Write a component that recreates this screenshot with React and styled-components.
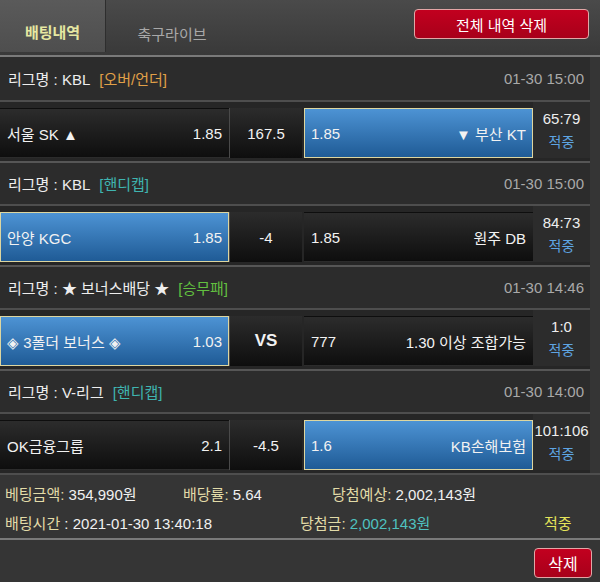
import React from 'react'
import styled, {createGlobalStyle} from 'styled-components'

const Global = createGlobalStyle`
  body{
    margin:0;
    background:#353535;
    font-family:"Liberation Sans","Noto Sans CJK KR",sans-serif;
    color:#eee;
  }
`

const bets = [
  {
    league: 'KBL', tag: '[오버/언더]', tagColor: '#e0a048', date: '01-30 15:00',
    home: '서울 SK ▲', homeOdd: '1.85', mid: '167.5', awayOdd: '1.85', away: '▼ 부산 KT',
    pick: 'away', score: '65:79',
  },
  {
    league: 'KBL', tag: '[핸디캡]', tagColor: '#3fb4b0', date: '01-30 15:00',
    home: '안양 KGC', homeOdd: '1.85', mid: '-4', awayOdd: '1.85', away: '원주 DB',
    pick: 'home', score: '84:73',
  },
  {
    league: '★ 보너스배당 ★', tag: '[승무패]', tagColor: '#62c040', date: '01-30 14:46',
    home: '◈ 3폴더 보너스 ◈', homeOdd: '1.03', mid: 'VS', awayOdd: '777', away: '1.30 이상 조합가능',
    pick: 'home', score: '1:0', bold: true,
  },
  {
    league: 'V-리그', tag: '[핸디캡]', tagColor: '#3fb4b0', date: '01-30 14:00',
    home: 'OK금융그룹', homeOdd: '2.1', mid: '-4.5', awayOdd: '1.6', away: 'KB손해보험',
    pick: 'away', score: '101:106',
  },
]

const Page = styled.div`
  width:600px;
  min-height:582px;
  background:#353535;
`

const TopBar = styled.div`
  height:55px;
  display:flex;
  align-items:stretch;
  background:linear-gradient(#4a4a4a,#393939);
  border-bottom:2px solid #7a7a7a;
`

const Tab = styled.div`
  width:${p => p.$w}px;
  display:flex;
  align-items:center;
  justify-content:center;
  padding-top:11px;
  box-sizing:border-box;
  font-size:15px;
  font-weight:${p => p.$active ? 700 : 400};
  color:${p => p.$active ? '#e6e8a2' : '#a8a8a8'};
  background:${p => p.$active ? 'linear-gradient(#5a5a5a,#4e4e4e)' : 'transparent'};
  border-right:${p => p.$active ? '1px solid #2e2e2e' : 'none'};
  margin-bottom:${p => p.$active ? '3px' : '0'};
`

const RedButton = styled.button`
  font-family:inherit;
  font-size:${p => p.$small ? 16 : 15}px;
  color:#fff;
  background:linear-gradient(#c2001f,#a8001a);
  border:1px solid #e2a6a6;
  border-radius:4px;
  width:${p => p.$w}px;
  height:30px;
  padding:0;
`

const TopButton = styled(RedButton)`
  margin:9px 11px 0 auto;
`

const List = styled.div`
  width:590px;
`

const LeagueHead = styled.div`
  height:43px;
  display:flex;
  align-items:center;
  justify-content:space-between;
  padding:0 6px 0 8px;
  background:#2c2c2c;
  border-top:${p => p.$first ? 'none' : '2px solid #565656'};
  box-sizing:border-box;
  font-size:15px;
`

const Tag = styled.span`
  color:${p => p.$c};
  margin-left:9px;
`

const DateText = styled.span`
  color:#a9a9a9;
`

const BetRow = styled.div`
  height:61px;
  display:flex;
  align-items:stretch;
  padding:6px 0 3px;
  box-sizing:border-box;
  background:#262626;
  border-top:2px solid #4e4e4e;
`

const Cell = styled.div`
  display:flex;
  align-items:center;
  justify-content:space-between;
  box-sizing:border-box;
  width:${p => p.$w}px;
  padding:0 6px;
  font-size:15px;
  color:#f2f2f2;
  background:${p => p.$on
    ? 'linear-gradient(#4d93d4,#1f5b96)'
    : 'linear-gradient(#2c2c2c,#0e0e0e)'};
  border:1px solid ${p => p.$on ? '#ddd6a0' : 'transparent'};
`

const Mid = styled.div`
  width:72px;
  display:flex;
  align-items:center;
  justify-content:center;
  border-left:1px solid #4a4a4a;
  margin-right:2px;
  background:linear-gradient(#2c2c2c,#0e0e0e);
  font-size:${p => p.$bold ? 17 : 15}px;
  font-weight:${p => p.$bold ? 700 : 400};
  color:#f2f2f2;
`

const Result = styled.div`
  flex:1;
  display:flex;
  flex-direction:column;
  align-items:center;
  justify-content:center;
  gap:4px;
  font-size:15px;
  margin-top:-6px;
  background:#2c2c2c;
`

const Hit = styled.span`
  color:#5ea4e2;
  font-size:14px;
`

const Summary = styled.div`
  padding:8px 5px 0;
  font-size:15px;
  display:flex;
  flex-direction:column;
  gap:8px;
  height:67px;
  box-sizing:border-box;
  border-bottom:2px solid #7a7a7a;
  border-top:2px solid #4e4e4e;
`

const SumLine = styled.div`
  display:flex;
`

const Item = styled.span`
  width:${p => p.$w ? p.$w + 'px' : 'auto'};
  color:${p => p.$c || '#f0f0f0'};
  white-space:nowrap;
`

const Label = styled.span`
  color:#e2dba8;
`

const Foot = styled.div`
  display:flex;
  justify-content:flex-end;
  padding:8px 8px 0;
`

function Bet({b, first}) {
  return (
    <>
      <LeagueHead $first={first}>
        <span>리그명 : {b.league}<Tag $c={b.tagColor}>{b.tag}</Tag></span>
        <DateText>{b.date}</DateText>
      </LeagueHead>
      <BetRow>
        <Cell $w={229} $on={b.pick === 'home'}>
          <span>{b.home}</span><span>{b.homeOdd}</span>
        </Cell>
        <Mid $bold={b.bold}>{b.mid}</Mid>
        <Cell $w={229} $on={b.pick === 'away'}>
          <span>{b.awayOdd}</span><span>{b.away}</span>
        </Cell>
        <Result>
          <span>{b.score}</span>
          <Hit>적중</Hit>
        </Result>
      </BetRow>
    </>
  )
}

const App = () => {
  return (
    <Page>
      <Global/>
      <TopBar>
        <Tab $active $w={106}>배팅내역</Tab>
        <Tab $w={132}>축구라이브</Tab>
        <TopButton $w={175}>전체 내역 삭제</TopButton>
      </TopBar>
      <List>
        {bets.map((b, i) => <Bet key={i} b={b} first={i === 0}/>)}
      </List>
      <Summary>
        <SumLine>
          <Item $w={178}><Label>베팅금액:</Label> 354,990원</Item>
          <Item $w={149}><Label>배당률:</Label> 5.64</Item>
          <Item><Label>당첨예상:</Label> 2,002,143원</Item>
        </SumLine>
        <SumLine>
          <Item $w={295}><Label>배팅시간</Label> : 2021-01-30 13:40:18</Item>
          <Item $w={244}><Label>당첨금:</Label> <Item $c="#4fc2c0">2,002,143원</Item></Item>
          <Item $c="#e4e45a">적중</Item>
        </SumLine>
      </Summary>
      <Foot>
        <RedButton $small $w={58}>삭제</RedButton>
      </Foot>
    </Page>
  )
}

export default App
